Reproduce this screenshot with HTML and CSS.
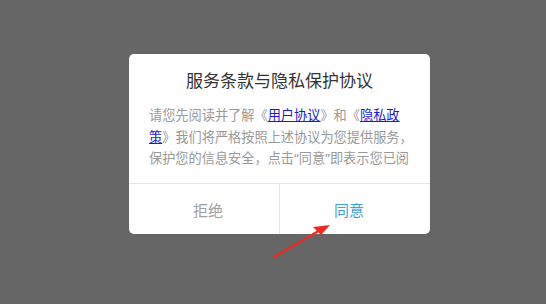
FILE: index.html
```html
<!DOCTYPE html>
<html lang="zh-CN">
<head>
<meta charset="utf-8">
<link rel="stylesheet" href="styles.css">
</head>
<body>
<div class="screen">
  <div class="dialog">
    <div class="title">服务条款与隐私保护协议</div>
    <div class="content">请您先阅读并了解《<span class="link">用户协议</span>》和《<span class="link">隐私政</span><span class="link">策</span><span>》我们将严格按照上述协议为您提供服务，</span><span>保护您的信息安全，点击“同意”即表示您已阅</span></div>
    <div class="actions">
      <div class="btn reject">拒绝</div>
      <div class="btn agree">同意</div>
    </div>
  </div>
  <svg class="arrow" width="70" height="45" viewBox="0 0 70 45">
    <path d="M4 41 L52 13" stroke="#ee2a22" stroke-width="2.2" stroke-linecap="round" fill="none"/>
    <polygon points="60,9 43,11 51,19" fill="#ee2a22"/>
  </svg>
</div>
</body>
</html>
```

FILE: styles.css
```css
html, body {
  margin: 0;
  padding: 0;
}
body {
  background: #666666;
  font-family: "Noto Sans", "Noto Sans CJK SC", sans-serif;
}
.screen {
  position: relative;
  width: 546px;
  height: 304px;
  display: flex;
  justify-content: flex-start;
  align-items: flex-start;
  padding: 54px 0 0 129px;
  box-sizing: border-box;
}
.dialog {
  width: 301px;
  height: 180px;
  background: #ffffff;
  border-radius: 5px;
  display: flex;
  flex-direction: column;
  overflow: hidden;
}
.title {
  font-size: 17px;
  color: #333333;
  text-align: center;
  line-height: 24px;
  padding-top: 15px;
  height: 24px;
}
.content {
  font-size: 13.2px;
  line-height: 21.5px;
  color: #999999;
  padding: 0 14px 0 20px;
  margin-top: 12px;
  height: 64px;
  overflow: hidden;
}
.link {
  color: #1a1ad6;
  text-decoration: underline;
}
.actions {
  margin-top: auto;
  height: 50px;
  border-top: 1px solid #e6e6e6;
  display: flex;
}
.btn {
  flex: none;
  box-sizing: border-box;
  display: flex;
  align-items: center;
  justify-content: center;
  font-size: 15px;
}
.reject {
  width: 151px;
  color: #a0a0a0;
  border-right: 1px solid #e6e6e6;
  padding-left: 8px;
}
.agree {
  width: 150px;
  color: #3d9ee0;
  padding-right: 12px;
}
.arrow {
  position: absolute;
  left: 270px;
  top: 216px;
}
```
